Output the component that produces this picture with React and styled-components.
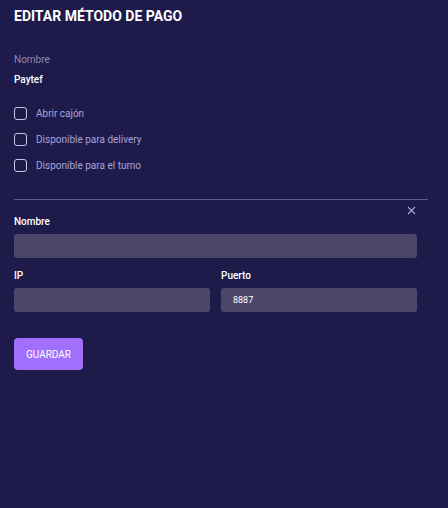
import React from "react";
import styled, { createGlobalStyle } from "styled-components";

const Global = createGlobalStyle`
  html, body { margin: 0; padding: 0; background: #1e1b4b; }
  body { font-family: Roboto, "Noto Sans", sans-serif; }
  * { box-sizing: border-box; }
`;

const Page = styled.div`
  width: 448px;
  min-height: 508px;
  background: #1e1b4b;
  padding: 6px 20px 0 14px;
  display: flex;
  flex-direction: column;
`;

const Title = styled.h1`
  margin: 0;
  font-size: 14px;
  line-height: 20px;
  font-weight: 700;
  color: #ffffff;
`;

const InfoBlock = styled.div`
  margin-top: 28px;
  display: flex;
  flex-direction: column;
  gap: 8px;
`;

const InfoLabel = styled.div`
  font-size: 10px;
  line-height: 12px;
  color: #8d89b4;
`;

const InfoValue = styled.div`
  font-size: 10px;
  line-height: 12px;
  font-weight: 500;
  color: #ffffff;
`;

const Checks = styled.div`
  margin-top: 20px;
  display: flex;
  flex-direction: column;
  gap: 12px;
`;

const CheckRow = styled.label`
  display: flex;
  align-items: center;
  gap: 9px;
  height: 14px;
  font-size: 10px;
  color: #a6a3dc;
`;

const Box = styled.span`
  width: 13px;
  height: 13px;
  border: 1.3px solid #c9c7e6;
  border-radius: 3px;
  flex: none;
`;

const Section = styled.div`
  margin-top: 27px;
  border-top: 1px solid #5d5990;
  position: relative;
  padding: 16px 11px 0 0;
`;

const Close = styled.button`
  position: absolute;
  top: 5px;
  right: 12px;
  width: 10px;
  height: 10px;
  padding: 0;
  border: none;
  background: none;
  display: flex;
  align-items: center;
  justify-content: center;
`;

const Field = styled.div`
  display: flex;
  flex-direction: column;
  gap: 6px;
`;

const Row = styled.div`
  margin-top: 12px;
  display: grid;
  grid-template-columns: 1fr 1fr;
  column-gap: 11px;
`;

const Label = styled.div`
  font-size: 10px;
  line-height: 12px;
  font-weight: 500;
  color: #ffffff;
`;

const Input = styled.div`
  height: 24px;
  border-radius: 3px;
  background: #4a476b;
  color: #ffffff;
  font-size: 9px;
  display: flex;
  align-items: center;
  padding-left: 12px;
`;

const Button = styled.button`
  margin-top: 26px;
  width: 69px;
  height: 32px;
  border: none;
  border-radius: 4px;
  background: #a06ffc;
  color: #ffffff;
  font-family: Roboto, sans-serif;
  font-size: 10px;
  font-weight: 400;
  padding: 0;
`;

export default function App() {
  return (
    <>
      <Global />
      <Page>
        <Title>EDITAR MÉTODO DE PAGO</Title>
        <InfoBlock>
          <InfoLabel>Nombre</InfoLabel>
          <InfoValue>Paytef</InfoValue>
        </InfoBlock>
        <Checks>
          <CheckRow><Box />Abrir cajón</CheckRow>
          <CheckRow><Box />Disponible para delivery</CheckRow>
          <CheckRow><Box />Disponible para el turno</CheckRow>
        </Checks>
        <Section>
          <Close aria-label="cerrar">
            <svg width="9" height="9" viewBox="0 0 9 9" fill="none">
              <path d="M1 1L8 8M8 1L1 8" stroke="#a9a6d0" strokeWidth="1.1" />
            </svg>
          </Close>
          <Field>
            <Label>Nombre</Label>
            <Input />
          </Field>
          <Row>
            <Field>
              <Label>IP</Label>
              <Input />
            </Field>
            <Field>
              <Label>Puerto</Label>
              <Input>8887</Input>
            </Field>
          </Row>
          <Button>GUARDAR</Button>
        </Section>
      </Page>
    </>
  );
}
